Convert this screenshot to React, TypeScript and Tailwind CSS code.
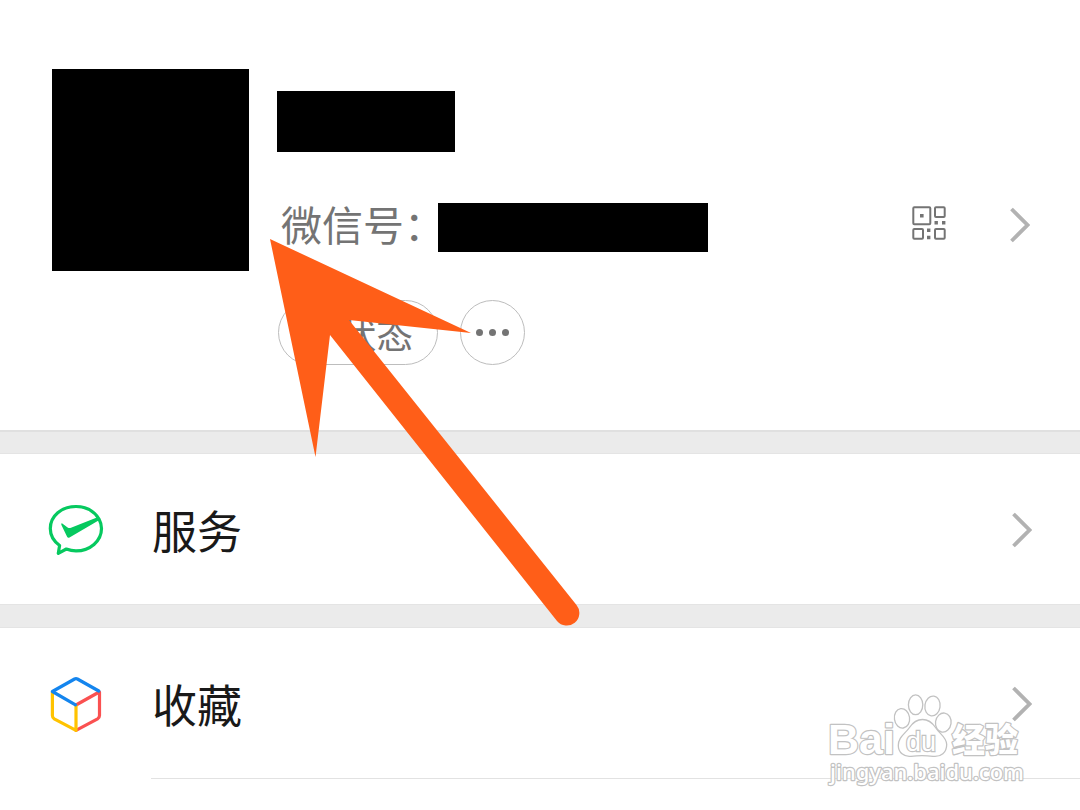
import React from "react";

function Chevron() {
  return (
    <svg className="h-9 w-5 shrink-0" viewBox="0 0 20 36" fill="none" stroke="#b2b2b2" strokeWidth="3.8" aria-hidden="true">
      <path d="M1.5 2 L17.5 18 L1.5 34" />
    </svg>
  );
}

function QrIcon() {
  return (
    <svg className="h-[34px] w-[34px] shrink-0" viewBox="0 0 34 34" fill="none" stroke="#747474" strokeWidth="2" aria-hidden="true">
      <rect x="1.3" y="1.3" width="17" height="17" rx="1" />
      <rect x="23" y="1.3" width="9.7" height="9.7" rx="1" />
      <rect x="1.3" y="23" width="9.7" height="9.7" rx="1" />
      <rect x="23" y="23" width="9.7" height="9.7" rx="1" />
      <path
        fill="#747474"
        stroke="none"
        d="M8 8h3.6v3.6H8z M22.5 15h3.4v3.4h-3.4z M30 15h3.4v3.4H30z M15 22.5h3.4v3.4H15z M15 29.8h3.4v3.4H15z"
      />
    </svg>
  );
}

function ServiceIcon() {
  return (
    <svg className="h-14 w-14 shrink-0" viewBox="0 0 56 56" aria-hidden="true">
      <path
        d="M51 17 C46 9 37.6 4.5 28 4.5 C13.6 4.5 2.3 14 2.3 26.6 C2.3 33.4 5.8 39.4 11.6 43.5 L10.3 51.3 L18.3 47 C21.4 48.2 24.6 48.9 28 48.9 C42 48.9 53.5 39.2 53.5 26.6 C53.5 23 52.6 19.9 51 17 Z"
        fill="none"
        stroke="#06c95f"
        strokeWidth="3.2"
        strokeLinejoin="round"
      />
      <path
        d="M14.3 21.5 L19.6 25.4 Q21.2 26.5 23 25.7 L49.5 15.2 L51.8 17.8 L21.5 35.6 Q19.9 36.4 19.1 34.8 L13.3 22.8 Q13.2 20.9 14.3 21.5 Z"
        fill="#06c95f"
      />
    </svg>
  );
}

function FavoritesIcon() {
  return (
    <svg className="h-14 w-14 shrink-0" viewBox="0 0 56 56" fill="none" strokeWidth="3.2" strokeLinejoin="round" strokeLinecap="round" aria-hidden="true">
      <path stroke="#fa5151" d="M51.5 16 V39.5 Q51.5 41.7 49.6 42.8 L28 54.4 M28 29 L51.2 16" />
      <path stroke="#ffc300" d="M4.4 16 V39.5 Q4.4 41.7 6.2 42.8 L28 54.4 V29.5" />
      <path stroke="#1485ee" d="M4.4 15.5 L26.6 3 Q28 2.3 29.4 3 L50.8 15 M4.4 15.5 L27.5 28.8" />
    </svg>
  );
}

function MenuRow({ icon, label }: { icon: React.ReactNode; label: string }) {
  return (
    <a href="#" className="flex h-[150px] items-center bg-white pt-0.5 pr-12 pl-12">
      {icon}
      <span className="ml-12 grow text-[45px] leading-[60px] text-[#191919]">{label}</span>
      <Chevron />
    </a>
  );
}

function Watermark() {
  return (
    <svg
      className="pointer-events-none absolute right-[50px] bottom-5 h-[100px] w-[206px]"
      viewBox="0 0 206 100"
      fill="#ffffff"
      stroke="#c2c2c2"
      strokeWidth="1.3"
      aria-label="Baidu"
    >
      <g strokeWidth="2.4" strokeLinejoin="round" style={{ paintOrder: "stroke" }}>
        <text x="4" y="64" fontSize="43" fontWeight="700" className="font-['Liberation_Sans',sans-serif]">Bai</text>
        <text x="128" y="62" fontSize="33" fontWeight="900" className="font-['Noto_Sans_CJK_SC',sans-serif]">经验</text>
        <text x="6" y="90" fontSize="22" fontWeight="500" className="font-['Noto_Sans','Open_Sans',sans-serif]">jingyan.baidu.com</text>
      </g>
      <ellipse cx="78" cy="28.3" rx="7.6" ry="9.8" transform="rotate(-8 78 28.3)" />
      <ellipse cx="91.6" cy="14.8" rx="7.2" ry="9.9" />
      <ellipse cx="108.5" cy="16" rx="7.6" ry="10" transform="rotate(8 108.5 16)" />
      <ellipse cx="119.3" cy="32.6" rx="7.8" ry="9.6" transform="rotate(8 119.3 32.6)" />
      <path d="M98.5 29.5 C92 29.5 88.5 33 85.5 37.5 C81 44 74.3 47 74.3 55.5 C74.3 62.5 80 67.2 87 66.3 C94.5 65.3 101.5 65.3 109 66.3 C117 67.2 122.7 62.5 122.7 54.5 C122.7 47 115.5 44 111.5 37.5 C108.5 33 105 29.5 98.5 29.5 Z" />
      <text x="82" y="61" fontSize="27" fontWeight="400" className="font-['Liberation_Sans',sans-serif]" strokeWidth="2.4" style={{ paintOrder: "stroke" }}>du</text>
    </svg>
  );
}

export default function App() {
  return (
    <main className="relative min-h-screen overflow-hidden bg-white font-['Noto_Sans_CJK_SC',sans-serif]">
      <header className="flex h-[430px] items-start pt-[69px] pr-[50px] pl-[52px]">
        <div className="h-[202px] w-[197px] shrink-0 bg-black" />
        <div className="ml-7 grow pt-[22px]">
          <div className="h-[61px] w-[178px] bg-black" />
          <div className="mt-[51px] flex h-[49px] items-start">
            <span className="-mt-1 ml-1 w-[157px] text-[41px] leading-[49px] whitespace-nowrap text-[#747474]">微信号：</span>
            <div className="h-[49px] w-[270px] bg-black" />
            <span className="grow" />
            <div className="mt-[3px] mr-16 flex">
              <QrIcon />
            </div>
            <div className="mt-1">
              <Chevron />
            </div>
          </div>
          <div className="mt-12 ml-px flex gap-[22px]">
            <button type="button" className="flex h-[65px] w-[160px] items-center justify-center rounded-full border border-[#bdbdbd] text-[37px] text-[#747474]">
              <span className="mr-4">+</span>
              <span className="mt-0.5">状态</span>
            </button>
            <button type="button" aria-label="更多" className="flex h-[65px] w-[65px] items-center justify-center gap-1.5 rounded-full border border-[#bdbdbd]">
              <span className="h-[7px] w-[7px] rounded-full bg-[#747474]" />
              <span className="h-[7px] w-[7px] rounded-full bg-[#747474]" />
              <span className="h-[7px] w-[7px] rounded-full bg-[#747474]" />
            </button>
          </div>
        </div>
      </header>
      <nav>
        <div className="h-6 border-t-2 border-b border-t-[#e0e0e0] border-b-[#e4e4e4] bg-[#ebebeb]" />
        <MenuRow icon={<ServiceIcon />} label="服务" />
        <div className="h-6 border-y border-[#e4e4e4] bg-[#ebebeb]" />
        <MenuRow icon={<FavoritesIcon />} label="收藏" />
        <div className="ml-[151px] h-8 border-t border-[#e2e2e2]" />
      </nav>
      <svg className="pointer-events-none absolute top-[239px] left-[270px] h-[387px] w-[310px]" viewBox="270 239 310 387" fill="#ff5e18" aria-hidden="true">
        <path d="M270 239 L471 333 L349 320 L576.5 605 A12.5 12.5 0 0 1 557 621 L330 335 L315.5 457 Z" />
      </svg>
      <Watermark />
    </main>
  );
}
